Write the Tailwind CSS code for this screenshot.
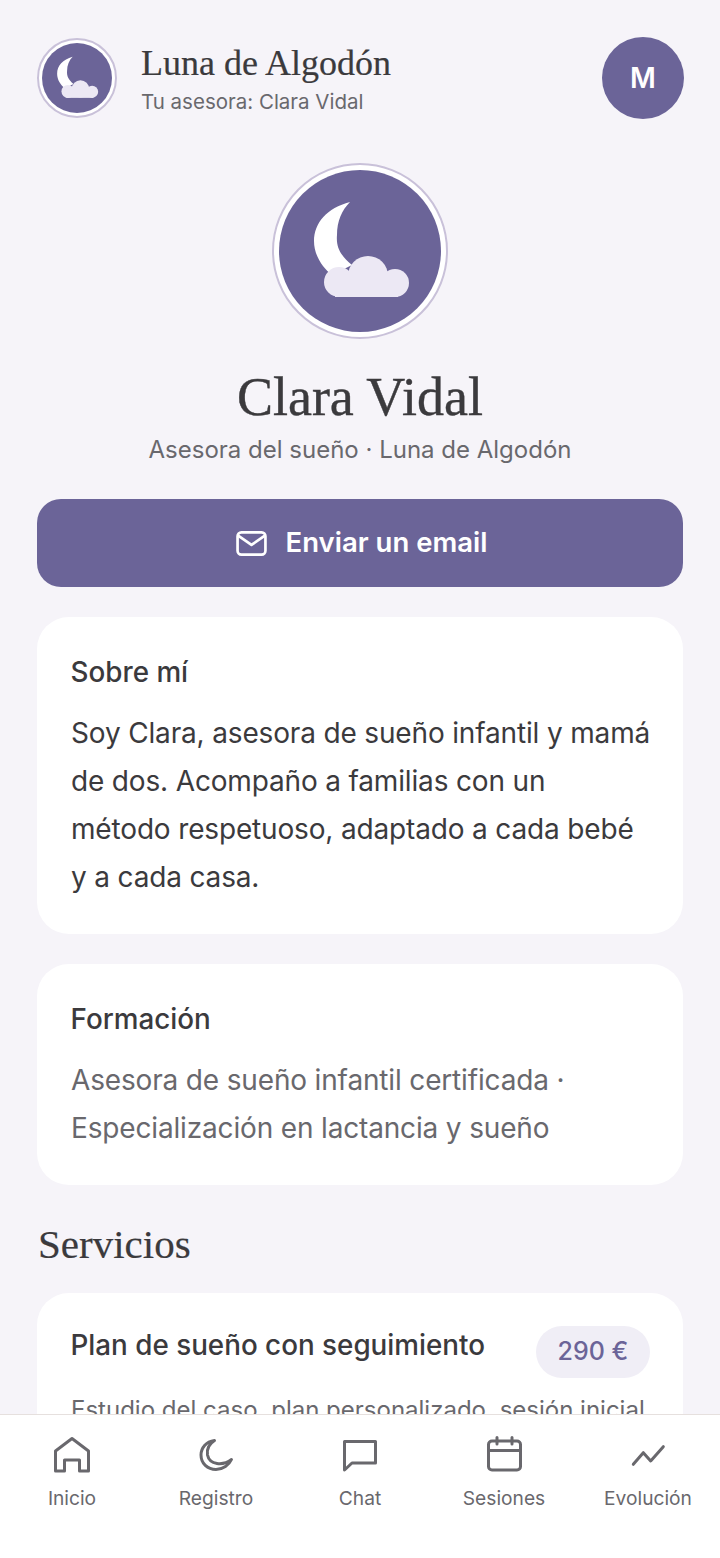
<!DOCTYPE html>
<html lang="es">
<head>
<meta charset="UTF-8">
<meta name="viewport" content="width=device-width, initial-scale=1.0">
<title>Luna de Algodón</title>
<script src="https://cdn.jsdelivr.net/npm/@tailwindcss/browser@4"></script>
</head>
<body class="bg-[#f6f4f9] font-['Inter',sans-serif] text-[#3b3a3d]">
<div class="w-[720px] h-[1558px] flex flex-col overflow-hidden">

  <main class="flex-1 min-h-0 overflow-hidden px-[37px] pt-[37px]">
    <!-- cabecera -->
    <header class="flex items-center h-[82px]">
      <div class="w-[80px] h-[80px] rounded-full border-2 border-[#c9c1d9] bg-white p-[3px] shrink-0">
        <svg class="w-full h-full" viewBox="7 7 162 162">
          <circle cx="88" cy="88" r="81" fill="#6b6498"/>
          <path d="M78 39C55 45 42 60 42 78C42 92 50 104 60 112L80 102C68 92 64 84 65 72C65 58 70 47 78 39Z" fill="#fff"/>
          <g fill="#ece8f4"><circle cx="67" cy="119" r="15"/><circle cx="96" cy="113" r="20"/><circle cx="123" cy="120" r="14"/><rect x="63" y="110" width="63" height="24"/></g>
        </svg>
      </div>
      <div class="ml-[24px] flex-1">
        <div class="font-['Liberation_Serif',serif] text-[36px] leading-[44px] [-webkit-text-stroke:0.2px]">Luna de Algodón</div>
        <div class="text-[20.5px] leading-[28px] mt-[3px] text-[#69686d]">Tu asesora: Clara Vidal</div>
      </div>
      <div class="w-[82px] h-[82px] -mr-px rounded-full bg-[#6b6498] text-white flex items-center justify-center text-[28px] font-semibold">M</div>
    </header>

    <!-- perfil -->
    <section class="flex flex-col items-center mt-[44px]">
      <div class="w-[176px] h-[176px] rounded-full border-2 border-[#c9c1d9] bg-white p-[5px]">
        <svg class="w-full h-full" viewBox="7 7 162 162">
          <circle cx="88" cy="88" r="81" fill="#6b6498"/>
          <path d="M78 39C55 45 42 60 42 78C42 92 50 104 60 112L80 102C68 92 64 84 65 72C65 58 70 47 78 39Z" fill="#fff"/>
          <g fill="#ece8f4"><circle cx="67" cy="119" r="15"/><circle cx="96" cy="113" r="20"/><circle cx="123" cy="120" r="14"/><rect x="63" y="110" width="63" height="24"/></g>
        </svg>
      </div>
      <h1 class="font-['Liberation_Serif',serif] text-[54px] leading-[64px] mt-[26px] [-webkit-text-stroke:0.4px]">Clara Vidal</h1>
      <p class="text-[24px] leading-[34px] text-[#69686d] mt-[4px]">Asesora del sueño · Luna de Algodón</p>
    </section>

    <button class="w-full h-[88px] rounded-[24px] bg-[#6b6498] text-white flex items-center justify-center gap-[19px] pl-[3px] text-[27.5px] font-semibold mt-[32px]">
      <svg class="w-[31px] h-[25px]" viewBox="0 0 32 26" fill="none" stroke="#fff" stroke-width="2.8" stroke-linecap="round" stroke-linejoin="round"><rect x="1.5" y="1.5" width="29" height="23" rx="4"/><path d="M2.5 5L16 14.5L29.5 5"/></svg>
      Enviar un email
    </button>

    <section class="bg-white rounded-[32px] pl-[34px] pr-[26px] pt-[36px] h-[317px] mt-[30px]">
      <h2 class="text-[27.8px] leading-[38px] font-[550] -ml-[0.5px]">Sobre mí</h2>
      <p class="text-[28px] leading-[48px] tracking-[-0.16px] mt-[18px]">Soy Clara, asesora de sueño infantil y mamá<br>de dos. Acompaño a familias con un<br>método respetuoso, adaptado a cada bebé<br>y a cada casa.</p>
    </section>

    <section class="bg-white rounded-[32px] px-[34px] pt-[36px] h-[221px] mt-[30px]">
      <h2 class="text-[27.8px] leading-[38px] font-[550] -ml-[0.5px]">Formación</h2>
      <p class="text-[28px] leading-[48px] tracking-[-0.16px] mt-[18px] text-[#69686d]">Asesora de sueño infantil certificada · Especialización en lactancia y sueño</p>
    </section>

    <h2 class="font-['Liberation_Serif',serif] text-[41px] leading-[50px] ml-px mt-[34px] [-webkit-text-stroke:0.2px]">Servicios</h2>

    <section class="bg-white rounded-[32px] pl-[34px] pr-[33px] pt-[33px] h-[300px] mt-[24px]">
      <div class="flex justify-between items-start">
        <h3 class="text-[27.8px] leading-[38px] font-[550] -ml-[0.5px]">Plan de sueño con seguimiento</h3>
        <span class="w-[114px] h-[52px] rounded-full bg-[#f0eef6] text-[#6b6498] text-[25px] font-medium flex items-center justify-center">290 €</span>
      </div>
      <p class="text-[24px] leading-[40px] text-[#69686d] mt-[12px] whitespace-nowrap">Estudio del caso, plan personalizado, sesión inicial</p>
    </section>
  </main>

  <!-- navegación inferior -->
  <nav class="h-[144px] shrink-0 bg-white border-t border-[#e6e0de] grid grid-cols-5 pt-[20px] text-[19.2px] leading-[28px] text-[#69686d]">
    <a class="flex flex-col items-center gap-[9px]">
      <svg class="w-[40px] h-[40px]" viewBox="0 0 40 40" fill="none" stroke="#69686d" stroke-width="3" stroke-linejoin="round"><path d="M3.5 16L20 3.5L36.5 16V36H27.5V25H12.5V36H3.5Z"/></svg>
      Inicio
    </a>
    <a class="flex flex-col items-center gap-[9px]">
      <svg class="w-[40px] h-[40px]" viewBox="0 0 40 40" fill="none" stroke="#69686d" stroke-width="3" stroke-linejoin="round"><path d="M18.5 5.5C10 6.5 5 13 5 20C5 28.5 11.5 34.5 20 34.5C27 34.5 33 30 35.5 24.5C27 31 13.5 30 11.5 20C10.5 14 13 9 18.5 5.5Z"/></svg>
      Registro
    </a>
    <a class="flex flex-col items-center gap-[9px]">
      <svg class="w-[40px] h-[40px]" viewBox="0 0 40 40" fill="none" stroke="#69686d" stroke-width="3" stroke-linejoin="round"><path d="M4.5 6.5H35.5V28H12L4.5 35Z"/></svg>
      Chat
    </a>
    <a class="flex flex-col items-center gap-[9px]">
      <svg class="w-[40px] h-[40px]" viewBox="0 0 40 40" fill="none" stroke="#69686d" stroke-width="3" stroke-linecap="round"><rect x="4.5" y="6" width="32" height="29" rx="3.5"/><path d="M4.5 15.5H36.5M13 2.5V9M28 2.5V9"/></svg>
      Sesiones
    </a>
    <a class="flex flex-col items-center gap-[9px]">
      <svg class="w-[40px] h-[40px]" viewBox="0 0 40 40" fill="none" stroke="#69686d" stroke-width="3" stroke-linecap="round" stroke-linejoin="round"><path d="M5.3 29.3L15.3 17.7L22.7 26L35.3 11.7"/></svg>
      Evolución
    </a>
  </nav>
</div>
</body>
</html>
